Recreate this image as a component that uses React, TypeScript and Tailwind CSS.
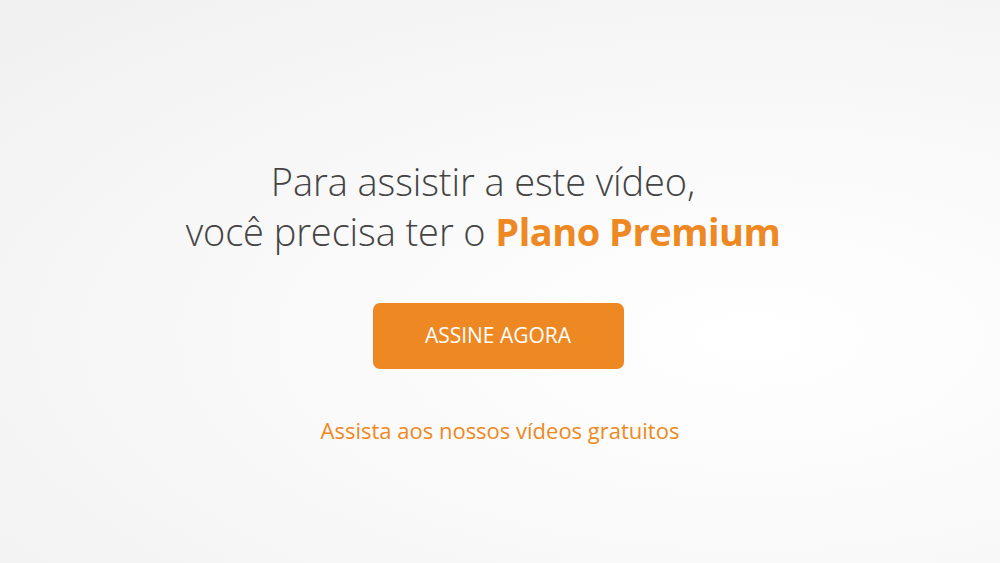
export default function App() {
  return (
    <div
      className="w-full h-[563px] overflow-hidden bg-[radial-gradient(ellipse_at_75%_60%,#ffffff_0%,#f9f9f9_45%,#f0f0f0_100%)] flex flex-col items-center pt-[156px]"
      style={{ fontFamily: '"Open Sans", "Liberation Sans", sans-serif' }}
    >
      <h1 className="text-[38px] leading-[50px] font-light text-[#444444] text-center tracking-[-0.1px] pr-[34px]">
        Para assistir a este vídeo,
        <br />
        você precisa ter o <span className="font-bold text-[#ee8822] tracking-[-0.5px]">Plano Premium</span>
      </h1>

      <button className="mt-[47px] mr-[4px] w-[251px] h-[66px] rounded-[7px] bg-[#ee8822] text-white text-[21px] font-normal">
        ASSINE AGORA
      </button>

      <a href="#" className="mt-[46px] text-[22px] leading-[30px] text-[#ee8822]">
        Assista aos nossos vídeos gratuitos
      </a>
    </div>
  )
}
